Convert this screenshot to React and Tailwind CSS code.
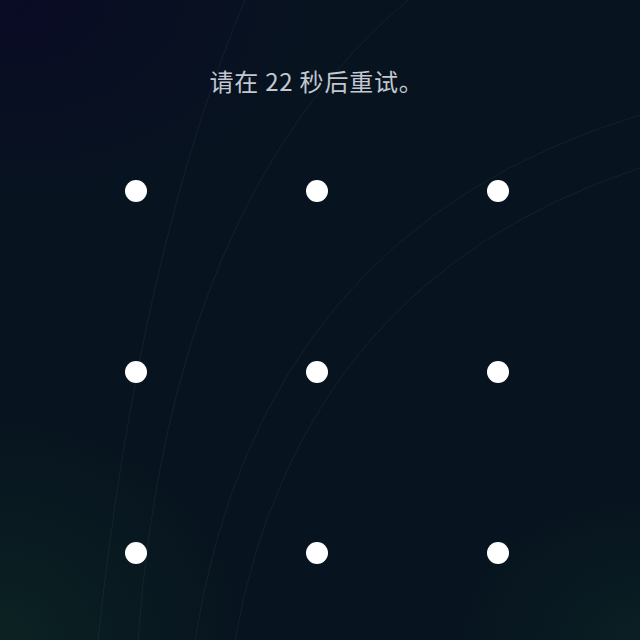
import React from 'react';

const dots = [0, 1, 2, 3, 4, 5, 6, 7, 8];

const Wallpaper = () => (
  <svg className="absolute inset-0 h-full w-full" viewBox="0 0 640 640" preserveAspectRatio="none">
    <defs>
      <radialGradient id="tl" cx="0" cy="0" r="1" gradientUnits="userSpaceOnUse" gradientTransform="translate(0 0) scale(360 230)">
        <stop offset="0" stopColor="#0a0b25" />
        <stop offset="1" stopColor="#0a0b25" stopOpacity="0" />
      </radialGradient>
      <radialGradient id="bl" cx="0" cy="0" r="1" gradientUnits="userSpaceOnUse" gradientTransform="translate(0 640) scale(240 220)">
        <stop offset="0" stopColor="#0b2222" />
        <stop offset="1" stopColor="#0b2222" stopOpacity="0" />
      </radialGradient>
      <radialGradient id="br" cx="0" cy="0" r="1" gradientUnits="userSpaceOnUse" gradientTransform="translate(640 640) scale(180 140)">
        <stop offset="0" stopColor="#0a1f23" />
        <stop offset="1" stopColor="#0a1f23" stopOpacity="0" />
      </radialGradient>
    </defs>
    <rect width="640" height="640" fill="#07141f" />
    <rect width="640" height="640" fill="url(#tl)" />
    <rect width="640" height="640" fill="url(#bl)" />
    <rect width="640" height="640" fill="url(#br)" />
    <g fill="none" stroke="#ffffff" strokeOpacity="0.05" strokeWidth="1">
      <path d="M245 0 Q140 250 98 640" />
      <path d="M408 0 Q170 200 138 640" />
      <path d="M640 115 Q260 230 195 640" />
      <path d="M640 168 Q300 280 235 640" />
    </g>
  </svg>
);

const App = () => {
  return (
    <div className="relative h-[640px] w-full overflow-hidden bg-[#07141f]" style={{ fontFamily: '"Noto Sans CJK SC", Roboto, sans-serif' }}>
      <Wallpaper />
      <div className="relative flex flex-col">
        <p className="ml-[-7px] pt-[64px] text-center text-[24px] leading-[34px] tracking-[0.8px] text-[#c3c7cf]">请在 22 秒后重试。</p>
        <div className="ml-[45px] mt-[2px] grid w-[543px] grid-cols-3">
          {dots.map(i => (
            <div key={i} className="flex h-[181px] w-[181px] items-center justify-center">
              <div className="h-[22px] w-[22px] rounded-full bg-white" />
            </div>
          ))}
        </div>
      </div>
    </div>
  );
};

export default App;
